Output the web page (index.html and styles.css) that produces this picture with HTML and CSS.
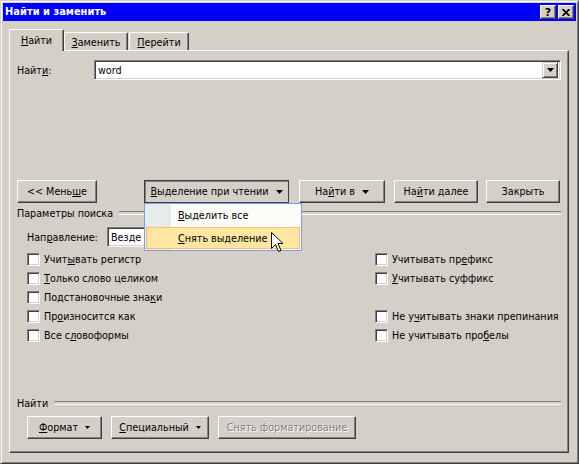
FILE: index.html
```html
<!DOCTYPE html>
<html lang="ru">
<head>
<meta charset="utf-8">
<title>Найти и заменить</title>
<link rel="stylesheet" href="styles.css">
</head>
<body>
<div class="win">
  <div class="title">
    <span class="title-text">Найти и заменить</span>
    <div class="tbtns">
      <span class="tbtn q">?</span>
      <span class="tbtn"><svg width="8" height="7" viewBox="0 0 8 7"><path d="M0.5 0 L7.5 7 M7.5 0 L0.5 7" stroke="#000" stroke-width="1.7"/></svg></span>
    </div>
  </div>
  <div class="body">
    <div class="tabs">
      <div class="tab sel"><span><u>Н</u>айти</span></div>
      <div class="tab w64"><span><u>З</u>аменить</span></div>
      <div class="tab w60"><span><u>П</u>ерейти</span></div>
    </div>
    <div class="panel">
      <div class="find-row">
        <span class="find-label">Найт<u>и</u>:</span>
        <div class="combo wide">
          <span class="combo-text">word</span>
          <span class="combo-btn"><svg width="7" height="4" viewBox="0 0 7 4"><path d="M0 0H7L3.5 4Z" fill="#000"/></svg></span>
        </div>
      </div>

      <div class="btn-row">
        <div class="btn w80"><span>&lt;&lt; Мень<u>ш</u>е</span></div>
        <div class="menu-wrap">
          <div class="btn pressed w145"><span><u>В</u>ыделение при чтении</span><svg class="arr" width="7" height="4" viewBox="0 0 7 4"><path d="M0 0H7L3.5 4Z" fill="#000"/></svg></div>
          <div class="menu">
            <div class="mi"><span><u>В</u>ыделить все</span></div>
            <div class="mi hot"><span><u>С</u>нять выделение</span></div>
            <svg class="cursor" width="13" height="20" viewBox="0 0 13 20"><path d="M0.5 0.5V16.5L4.5 12.5L7.5 19.5L10 18.5L7 11.5H12Z" fill="#fff" stroke="#000" stroke-width="1" stroke-linejoin="miter"/></svg>
          </div>
        </div>
        <div class="btn w86 ml10"><span>На<u>й</u>ти в</span><svg class="arr" width="7" height="4" viewBox="0 0 7 4"><path d="M0 0H7L3.5 4Z" fill="#000"/></svg></div>
        <div class="btn w84 ml9"><span>На<u>й</u>ти далее</span></div>
        <div class="btn w74 ml8"><span>Закрыть</span></div>
      </div>

      <div class="group"><span>Параметры поиска</span></div>

      <div class="dir-row">
        <span class="dir-label">Нап<u>р</u>авление:</span>
        <div class="combo dir"><span class="combo-text">Везде</span></div>
      </div>

      <div class="checks">
        <label class="cb"><span class="box"></span><span>Учит<u>ы</u>вать регистр</span></label>
        <label class="cb"><span class="box"></span><span>Учитывать пр<u>е</u>фикс</span></label>
        <label class="cb"><span class="box"></span><span><u>Т</u>олько слово целиком</span></label>
        <label class="cb"><span class="box"></span><span><u>У</u>читывать суффикс</span></label>
        <label class="cb"><span class="box"></span><span>Подстановочные зна<u>к</u>и</span></label>
        <span></span>
        <label class="cb"><span class="box"></span><span>Пр<u>о</u>износится как</span></label>
        <label class="cb"><span class="box"></span><span>Не у<u>ч</u>итывать знаки препинания</span></label>
        <label class="cb"><span class="box"></span><span>Все с<u>л</u>овоформы</span></label>
        <label class="cb"><span class="box"></span><span>Не учитывать про<u>б</u>елы</span></label>
      </div>

      <div class="group g2"><span>Найти</span></div>

      <div class="bottom-row">
        <div class="btn w75"><span><u>Ф</u>ормат</span><svg class="arr small" width="5" height="3" viewBox="0 0 5 3"><path d="M0 0H5L2.5 3Z" fill="#000"/></svg></div>
        <div class="btn w98"><span><u>С</u>пециальный</span><svg class="arr small" width="5" height="3" viewBox="0 0 5 3"><path d="M0 0H5L2.5 3Z" fill="#000"/></svg></div>
        <div class="btn w138 disabled"><span>Снять форматирование</span></div>
      </div>
    </div>
  </div>
</div>
</body>
</html>
```
FILE: styles.css
```css
* { box-sizing: border-box; }
html, body { margin: 0; padding: 0; }
body {
  width: 579px;
  height: 464px;
  overflow: hidden;
  background: #d4d0c8;
  font-family: "DejaVu Sans", "Liberation Sans", sans-serif;
  font-stretch: condensed;
  font-size: 10.7px;
  color: #000;
}
u { text-decoration: underline; text-underline-offset: 1px; }

.win {
  width: 579px;
  height: 464px;
  border: 1px solid;
  border-color: #d4d0c8 #404040 #404040 #d4d0c8;
  box-shadow: inset 1px 1px #fff, inset -1px -1px #808080;
  padding: 2px;
  background: #d4d0c8;
}

.title {
  height: 18px;
  background: #0000ff;
  color: #fff;
  font-size: 11px;
  font-weight: bold;
  display: flex;
  align-items: center;
  padding-left: 2px;
}
.title-text { line-height: 18px; }
.tbtns { margin-left: auto; margin-right: 2px; display: flex; gap: 2px; }
.tbtn {
  width: 16px;
  height: 14px;
  background: #d4d0c8;
  border: 1px solid;
  border-color: #fff #404040 #404040 #fff;
  box-shadow: inset -1px -1px #808080;
  display: flex;
  align-items: center;
  justify-content: center;
  color: #000;
  font-family: "DejaVu Sans", sans-serif;
  font-stretch: normal;
  font-size: 11px;
  font-weight: bold;
  line-height: 1;
}

.body { padding: 8px 7px 0 6px; }

.tabs { display: flex; align-items: flex-end; height: 21px; }
.tab {
  position: relative;
  height: 18px;
  border: 1px solid;
  border-bottom: none;
  border-color: #fff #404040 #404040 #fff;
  border-radius: 2px 2px 0 0;
  box-shadow: inset -1px 0 #808080;
  display: flex;
  align-items: center;
  justify-content: center;
  padding-top: 1px;
  background: #d4d0c8;
}
.tab.sel {
  width: 55px;
  height: 22px;
  margin-bottom: -1px;
  z-index: 2;
  padding-top: 0;
}
.w64 { width: 64px; }
.w60 { width: 60px; margin-left: 1px; }

.panel {
  height: 403px;
  border: 1px solid;
  border-color: #fff #404040 #404040 #fff;
  box-shadow: inset -1px -1px #808080;
  padding: 9px 7px 0 7px;
}

.find-row { display: flex; align-items: center; height: 20px; }
.find-label { width: 77px; }
.combo {
  height: 20px;
  background: #fff;
  border: 1px solid;
  border-color: #808080 #fff #fff #808080;
  box-shadow: inset 1px 1px #404040, inset -1px -1px #d4d0c8;
  display: flex;
  align-items: center;
  padding: 2px;
}
.combo.wide { width: 467px; }
.combo-text { padding-left: 1px; }
.combo-btn {
  margin-left: auto;
  width: 16px;
  height: 16px;
  background: #d4d0c8;
  border: 1px solid;
  border-color: #d4d0c8 #404040 #404040 #d4d0c8;
  box-shadow: inset 1px 1px #fff, inset -1px -1px #808080;
  display: flex;
  align-items: center;
  justify-content: center;
}

.btn-row { margin-top: 100px; display: flex; height: 23px; }
.btn {
  height: 23px;
  background: #d4d0c8;
  border: 1px solid;
  border-color: #fff #404040 #404040 #fff;
  box-shadow: inset -1px -1px #808080;
  display: flex;
  align-items: center;
  justify-content: center;
  white-space: nowrap;
}
.btn.pressed {
  border-color: #404040;
  box-shadow: inset 1px 1px #808080;
}
.arr { margin-left: 7px; }
.w80 { width: 80px; }
.w145 { width: 145px; }
.w86 { width: 86px; }
.w84 { width: 84px; }
.w74 { width: 74px; }
.w75 { width: 75px; }
.w98 { width: 98px; }
.w138 { width: 138px; }
.ml10 { margin-left: 10px; }
.ml9 { margin-left: 9px; }
.ml8 { margin-left: 8px; }

.menu-wrap { position: relative; margin-left: 47px; }
.menu {
  position: absolute;
  left: 0;
  top: 23px;
  width: 158px;
  height: 48px;
  z-index: 10;
  border: 1px solid #7b9ee6;
  background: linear-gradient(to right, #e6ebeb 0 26px, #fcfcf9 26px);
}
.mi {
  height: 22px;
  margin: 0 1px 1px 1px;
  border: 1px solid transparent;
  display: flex;
  align-items: center;
  padding-left: 31px;
  white-space: nowrap;
}
.mi.hot {
  background: #ffe7a2;
  border-color: #ffbd69;
}
.cursor { position: absolute; left: 126px; top: 28px; }

.group {
  display: flex;
  align-items: center;
  height: 14px;
  margin-top: 3px;
  white-space: nowrap;
}
.group::after {
  content: "";
  flex: 1;
  height: 2px;
  margin-left: 6px;
  border-top: 1px solid #808080;
  border-bottom: 1px solid #fff;
}
.group.g2 { margin-top: 51px; }

.dir-row { margin-top: 7px; display: flex; align-items: center; height: 20px; padding-left: 10px; }
.dir-label { width: 80px; }
.combo.dir { width: 150px; }

.checks {
  margin-top: 3px;
  margin-left: 10px;
  display: grid;
  grid-template-columns: 348px 1fr;
  grid-auto-rows: 19px;
}
.cb { display: flex; align-items: center; gap: 4px; white-space: nowrap; }
.box {
  width: 13px;
  height: 13px;
  flex: none;
  background: #fff;
  border: 1px solid;
  border-color: #808080 #fff #fff #808080;
  box-shadow: inset 1px 1px #404040, inset -1px -1px #d4d0c8;
}

.bottom-row { margin-top: 6px; display: flex; gap: 9px; padding-left: 10px; }
.btn.disabled { color: #808080; text-shadow: 1px 1px 0 #fff; }
```
